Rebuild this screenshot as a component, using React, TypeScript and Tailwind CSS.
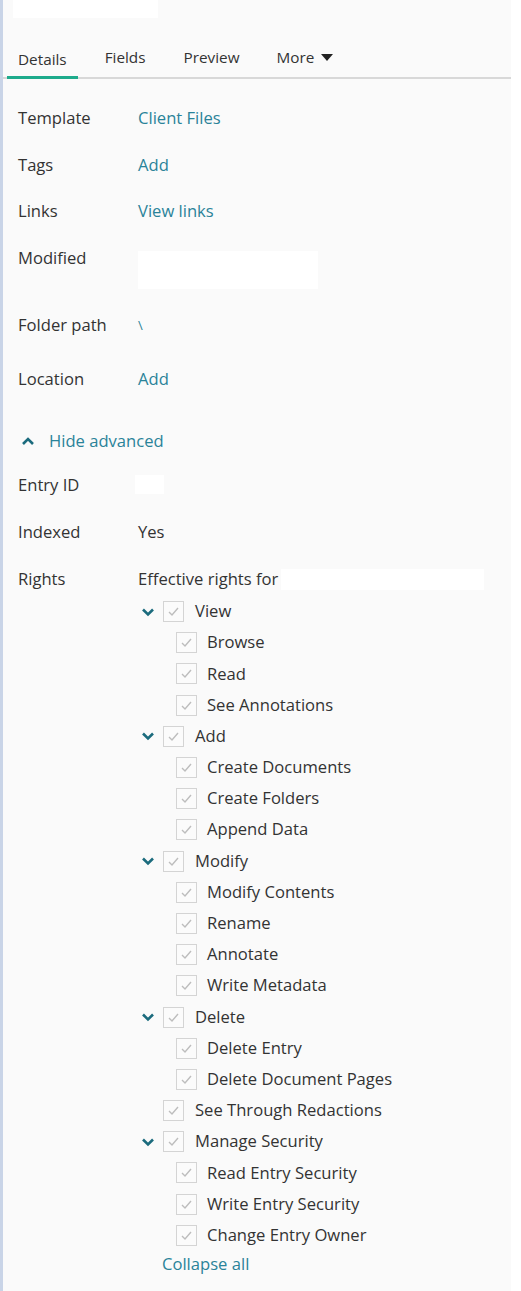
import React from "react";

interface RightNode {
    label: string;
    children?: string[];
}

const rights: RightNode[] = [
    { label: "View", children: ["Browse", "Read", "See Annotations"] },
    { label: "Add", children: ["Create Documents", "Create Folders", "Append Data"] },
    { label: "Modify", children: ["Modify Contents", "Rename", "Annotate", "Write Metadata"] },
    { label: "Delete", children: ["Delete Entry", "Delete Document Pages"] },
    { label: "See Through Redactions" },
    { label: "Manage Security", children: ["Read Entry Security", "Write Entry Security", "Change Entry Owner"] },
];

const CheckBox: React.FC = () => (
    <span className="flex h-[21px] w-[21px] shrink-0 items-center justify-center border-[1.5px] border-[#d4d4d4] bg-[#fbfbfb]">
        <svg width="13" height="13" viewBox="0 0 13 13" fill="none">
            <path d="M2 7 L5 10 L11 3" stroke="#bdbdbd" strokeWidth="1.4" />
        </svg>
    </span>
);

const Chevron: React.FC<{ up?: boolean }> = ({ up }) => (
    <svg width="14" height="10" viewBox="0 0 14 10" fill="none">
        <path
            d={up ? "M2 8 L7 3 L12 8" : "M2 2.5 L7 7.5 L12 2.5"}
            stroke="#1b6b7d"
            strokeWidth="2.6"
        />
    </svg>
);

const Row: React.FC<{ label: string; className?: string; children?: React.ReactNode }> = ({
    label,
    className,
    children,
}) => (
    <div className={`flex ${className ?? ""}`}>
        <div className="w-[120px] h-[24px] leading-[24px] shrink-0">{label}</div>
        <div className="flex-1">{children}</div>
    </div>
);

const linkCls = "text-[#2a8399] h-[24px] leading-[24px]";

export default function App() {
    return (
        <div className="flex w-[521px] min-h-[1291px] bg-white" style={{ fontFamily: '"Open Sans", sans-serif' }}>
            <div className="w-[3px] shrink-0 bg-[#c9d4e7]" />
            <div className="w-[508px] bg-[#fafafa] text-[16.6px] text-[#333333]">
                {/* header */}
                <div className="h-[44px] pl-[10px]">
                    <div className="w-[145px] h-[18px] bg-white" />
                </div>
                <div className="flex h-[35px] items-end border-b-2 border-[#d8d8d8] pl-[4px] text-[15.3px]">
                    <div className="px-[11px] pb-[6px] border-b-[3px] border-[#1eab8c] -mb-[2px] h-[33px] leading-[22px] flex items-end">
                        Details
                    </div>
                    <div className="ml-[27px] pb-[9px] leading-[22px]">Fields</div>
                    <div className="ml-[38px] pb-[9px] leading-[22px]">Preview</div>
                    <div className="ml-[37px] pb-[9px] leading-[22px] flex items-center gap-[7px]">
                        More
                        <svg width="12" height="7" viewBox="0 0 12 7">
                            <path d="M0 0 L12 0 L6 7 Z" fill="#222" />
                        </svg>
                    </div>
                </div>

                <div className="pl-[15px] pt-[27px]">
                    <Row label="Template">
                        <div className={linkCls}>Client Files</div>
                    </Row>
                    <Row label="Tags" className="mt-[23px]">
                        <div className={linkCls}>Add</div>
                    </Row>
                    <Row label="Links" className="mt-[22px]">
                        <div className={linkCls}>View links</div>
                    </Row>
                    <Row label="Modified" className="mt-[23px]">
                        <div className="mt-[5px] w-[180px] h-[38px] bg-white" />
                    </Row>
                    <Row label="Folder path" className="mt-[24px]">
                        <div className="h-[24px] leading-[24px] text-[#2a8399] text-[13px]">\</div>
                    </Row>
                    <Row label="Location" className="mt-[30px]">
                        <div className={linkCls}>Add</div>
                    </Row>

                    <div className="mt-[38px] flex h-[24px] items-center text-[#2a8399]">
                        <span className="ml-[3px] mr-[14px] flex">
                            <Chevron up />
                        </span>
                        Hide advanced
                    </div>

                    <Row label="Entry ID" className="mt-[20px]">
                        <div className="-ml-[3px] mt-[2px] w-[29px] h-[19px] bg-white" />
                    </Row>
                    <Row label="Indexed" className="mt-[23px]">
                        <div className="h-[24px] leading-[24px]">Yes</div>
                    </Row>
                    <Row label="Rights" className="mt-[23px]">
                        <div className="flex h-[24px] items-center">
                            Effective rights for
                            <span className="ml-[3px] w-[203px] h-[21px] bg-white" />
                        </div>
                        <div className="mt-[5px]">
                            {rights.map((r) => (
                                <div key={r.label}>
                                    <div className="flex h-[31.2px] items-center">
                                        <span className="w-[25px] flex pl-[3px]">
                                            {r.children && <Chevron />}
                                        </span>
                                        <CheckBox />
                                        <span className="ml-[11px]">{r.label}</span>
                                    </div>
                                    {r.children?.map((c) => (
                                        <div key={c} className="flex h-[31.2px] items-center pl-[38px]">
                                            <CheckBox />
                                            <span className="ml-[10px]">{c}</span>
                                        </div>
                                    ))}
                                </div>
                            ))}
                            <div className="ml-[24px] mt-[1px] h-[24px] leading-[24px] text-[#2a8399]">
                                Collapse all
                            </div>
                        </div>
                    </Row>
                </div>
            </div>
        </div>
    );
}
